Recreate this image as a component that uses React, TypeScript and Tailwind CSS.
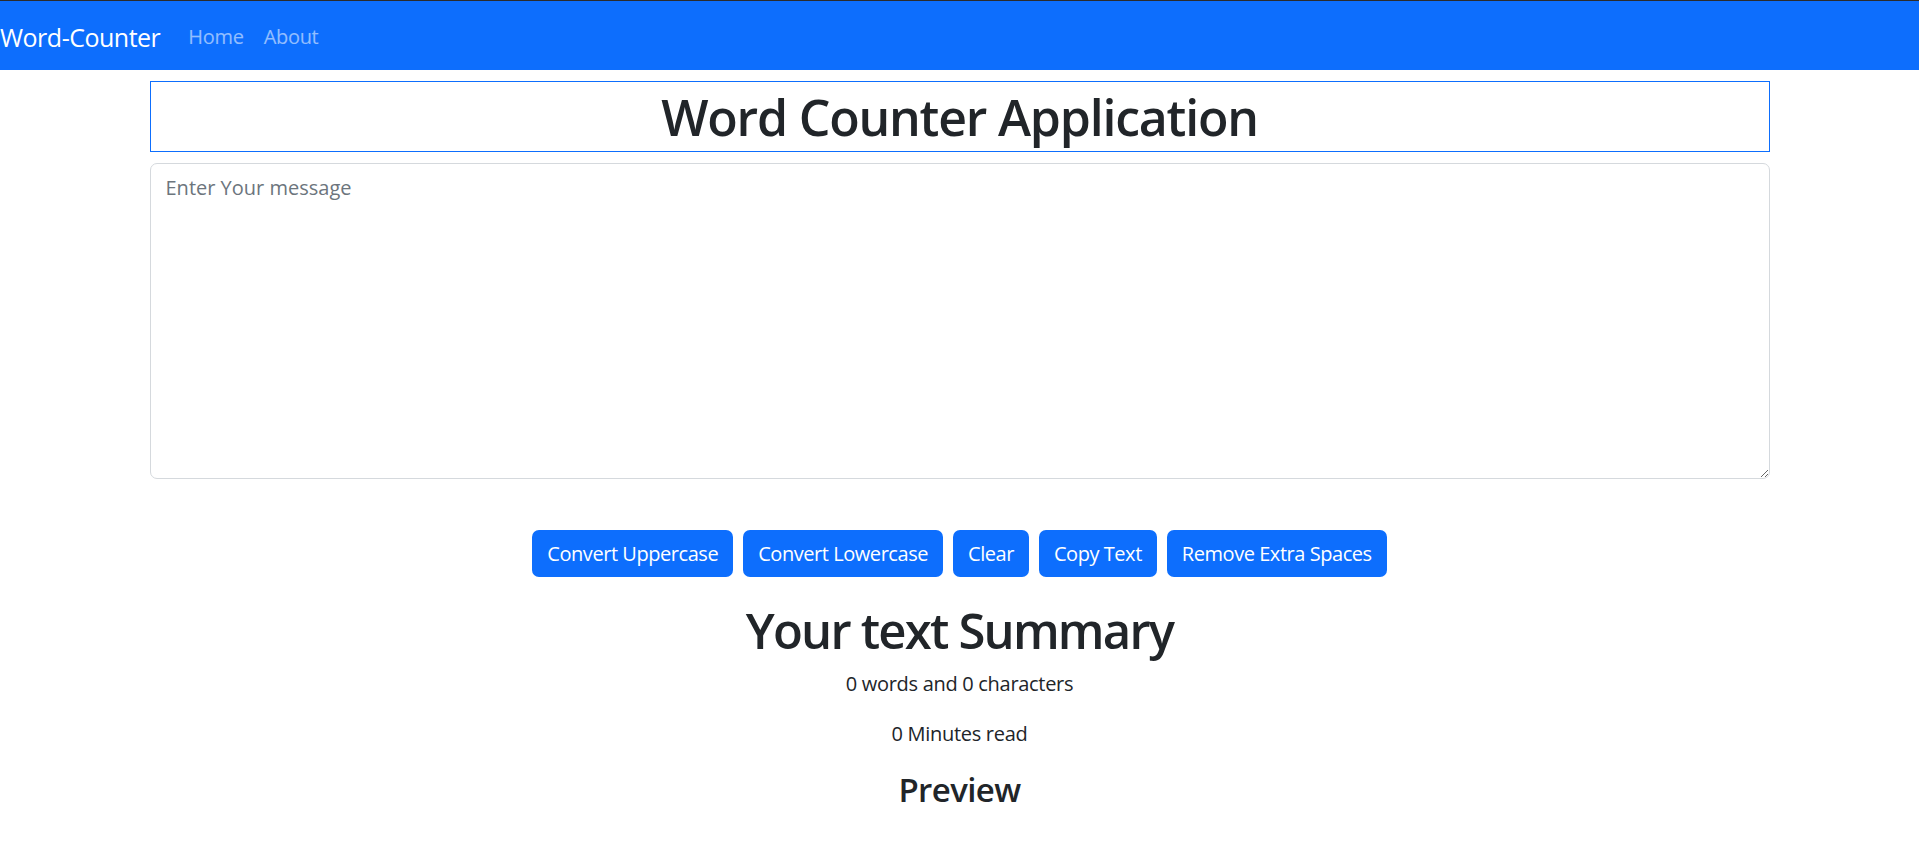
import React from "react";

export default function App() {
  const buttons = [
    "Convert Uppercase",
    "Convert Lowercase",
    "Clear",
    "Copy Text",
    "Remove Extra Spaces",
  ];
  return (
    <div
      className="min-h-[865px] bg-white text-[#212529]"
      style={{ fontFamily: '"Open Sans", "Noto Sans", sans-serif' }}
    >
      <nav className="h-[70px] bg-[#0d6efd] border-t border-[#2b2b2b] flex items-center pt-[2px]">
        <span className="text-[25px] text-white leading-[38px] mr-[18px] tracking-[-0.5px]">
          Word-Counter
        </span>
        <span className="text-[20px] text-white/55 px-[10px] leading-[30px] tracking-[-0.3px]">Home</span>
        <span className="text-[20px] text-white/55 px-[10px] leading-[30px] tracking-[-0.3px]">About</span>
      </nav>

      <main className="w-[1620px] mx-auto">
        <div className="mt-[11px] h-[71px] border border-[#0d6efd] flex items-center justify-center pt-[1px]">
          <h1 className="text-[50px] font-semibold leading-[60px] tracking-[-1.2px]">
            Word Counter Application
          </h1>
        </div>

        <textarea
          className="block mt-[11px] w-full h-[316px] rounded-[7px] border border-[#d5d9dd] px-[15px] pt-[9px] pb-[7px] text-[20px] leading-[30px] placeholder:text-[#6c757d] outline-none resize-y"
          placeholder="Enter Your message"
        />

        <div className="mt-[51px] flex justify-center gap-[10px]">
          {buttons.map((b) => (
            <button
              key={b}
              className="h-[47px] px-[15px] rounded-[7px] bg-[#0d6efd] text-white text-[20px] leading-[30px] tracking-[-0.45px]"
            >
              {b}
            </button>
          ))}
        </div>

        <div className="flex flex-col items-center">
          <h1 className="mt-[23px] text-[49px] font-semibold leading-[60px] tracking-[-1.8px]">
            Your text Summary
          </h1>
          <p className="mt-[9px] text-[20px] leading-[30px] tracking-[-0.3px]">0 words and 0 characters</p>
          <p className="mt-[20px] text-[20px] leading-[30px] tracking-[-0.3px]">0 Minutes read</p>
          <h2 className="mt-[20px] text-[33px] font-semibold leading-[42px] tracking-[-0.6px]">
            Preview
          </h2>
        </div>
      </main>
    </div>
  );
}
